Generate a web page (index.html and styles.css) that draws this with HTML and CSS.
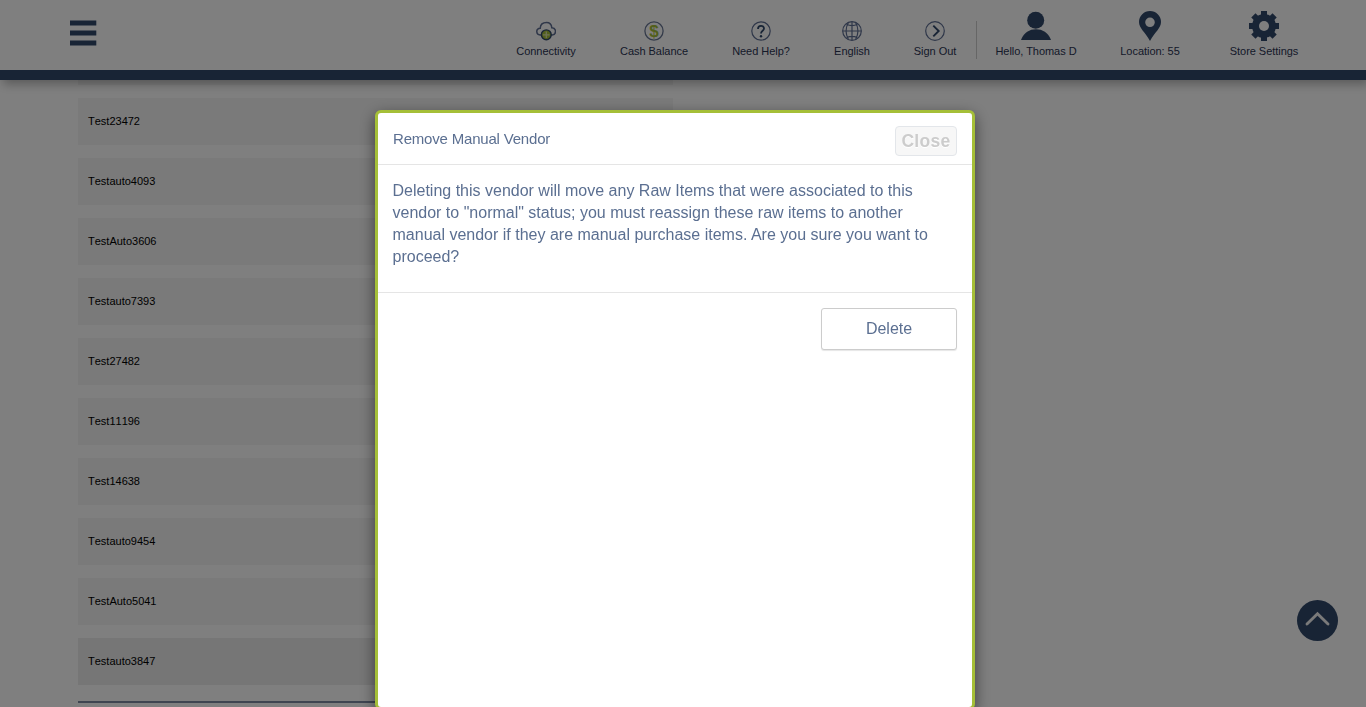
FILE: index.html
```html
<!DOCTYPE html>
<html lang="en">
<head>
<meta charset="utf-8">
<title>Manual Vendors</title>
<link rel="stylesheet" href="styles.css">
</head>
<body>
<header class="topbar">
  <button class="menu" aria-label="Menu"><svg width="27" height="26" viewBox="0 0 27 26" fill="#30486b"><path d="M0 .4h26.300v5.200H0zM0 10.400h26.300v5.200H0zM0 20.400h26.300v5.200H0z"/></svg></button>
  <nav class="tools">
    <a class="tool connectivity">
      <svg class="icon" width="20" height="20" viewBox="0 0 20 20"><path d="M6 14H4.200C-.3 13.500-.4 7.500 4.200 7.200C4.500 3 7.500 1.500 10.500 1.500C13.500 1.500 15.500 3.500 15.800 6.800C20.800 7.300 20.500 13.600 16.300 14H15" fill="none" stroke="#5e6e92" stroke-width="1.500"/><circle cx="10.300" cy="13.800" r="4.900" fill="#a5bf38" stroke="#30486b" stroke-width="1.400"/><path d="M10.300 10.500v6.600M7 13.800h6.600" stroke="#dbe5a8" stroke-width="1.300"/></svg>
      <span>Connectivity</span>
    </a>
    <a class="tool cash">
      <svg class="icon" width="20" height="20" viewBox="0 0 20 20"><circle cx="10" cy="10" r="9.100" fill="none" stroke="#6a7895" stroke-width="1.300"/><text x="10" y="15.800" text-anchor="middle" class="dollar">$</text></svg>
      <span>Cash Balance</span>
    </a>
    <a class="tool help">
      <svg class="icon" width="20" height="20" viewBox="0 0 20 20" fill="none"><circle cx="10" cy="10" r="9.200" stroke="#5e6e92" stroke-width="1.200"/><path d="M7 8c0-4 6-4 6-.5 0 2.200-3 2.300-3 5" stroke="#30486b" stroke-width="1.800"/><circle cx="10" cy="15.200" r="1.200" fill="#30486b"/></svg>
      <span>Need Help?</span>
    </a>
    <a class="tool language">
      <svg class="icon" width="20" height="20" viewBox="0 0 20 20" fill="none" stroke="#5e6e92" stroke-width="1.200"><circle cx="10" cy="10" r="9.300"/><path d="M6.500 1.300C3.300 7 3.300 13 6.500 18.700M13.500 1.300c3.200 5.700 3.200 11.700 0 17.400M.7 10h18.600M10 .7v18.600M4.500 3.200q5.500 2.700 11 0M4.500 16.800q5.500-2.700 11 0"/></svg>
      <span>English</span>
    </a>
    <a class="tool signout">
      <svg class="icon" width="20" height="20" viewBox="0 0 20 20" fill="none"><circle cx="10" cy="10" r="9.300" stroke="#5e6e92" stroke-width="1.200"/><path d="M8.300 4.600l5.400 5.400-5.400 5.400" stroke="#30486b" stroke-width="1.900"/></svg>
      <span>Sign Out</span>
    </a>
    <span class="divider"></span>
    <a class="tool user">
      <svg class="icon" width="30" height="30" viewBox="0 0 30 30" fill="#30486b"><circle cx="14.700" cy="9.300" r="8.500"/><path d="M0 29C3 21.500 8.500 18.300 15 18.300S27 21.500 30 29z"/></svg>
      <span>Hello, Thomas D</span>
    </a>
    <a class="tool location">
      <svg class="icon" width="30" height="30" viewBox="0 0 30 30" fill="#30486b"><path fill-rule="evenodd" d="M15 0a11 11 0 0 1 11 11c0 6-6 10-11 19C10 21 4 17 4 11A11 11 0 0 1 15 0zm0 6.500a4.800 4.800 0 1 0 0 9.600 4.800 4.800 0 0 0 0-9.600z"/></svg>
      <span>Location: 55</span>
    </a>
    <a class="tool settings">
      <svg class="icon" width="30" height="30" viewBox="0 0 30 30"><g fill="#30486b"><path id="tooth" d="M12 0h6v30h-6z"/><use href="#tooth" transform="rotate(45 15 15)"/><use href="#tooth" transform="rotate(90 15 15)"/><use href="#tooth" transform="rotate(135 15 15)"/><circle cx="15" cy="15" r="12"/></g><circle cx="15" cy="15" r="5" fill="#fff"/></svg>
      <span>Store Settings</span>
    </a>
  </nav>
</header>
<main class="vendors">
  <div class="vendor"></div>
  <div class="vendor">Test23472</div>
  <div class="vendor">Testauto4093</div>
  <div class="vendor">TestAuto3606</div>
  <div class="vendor">Testauto7393</div>
  <div class="vendor">Test27482</div>
  <div class="vendor">Test11196</div>
  <div class="vendor">Test14638</div>
  <div class="vendor">Testauto9454</div>
  <div class="vendor">TestAuto5041</div>
  <div class="vendor current">Testauto3847</div>
  <div class="rule"></div>
</main>
<button class="to-top" aria-label="Back to top"><svg width="41" height="41" viewBox="0 0 41 41"><circle cx="20.500" cy="20.500" r="20.500" fill="#30486b"/><path d="M10 24L20.500 13.800 31 24" fill="none" stroke="#f4f4f4" stroke-width="2.900" stroke-linecap="round"/></svg></button>
<div class="overlay"></div>
<section class="dialog" role="dialog">
  <div class="dialog-head"><h1 class="title">Remove Manual Vendor</h1><button class="close">Close</button></div>
  <p class="message">Deleting this vendor will move any Raw Items that were associated to this vendor to "normal" status; you must reassign these raw items to another manual vendor if they are manual purchase items. Are you sure you want to proceed?</p>
  <div class="actions"><button class="delete">Delete</button></div>
</section>
</body>
</html>
```
FILE: styles.css
```css
* { box-sizing: border-box; }
html, body { height: 100%; overflow: hidden; }
body { margin: 0; background: #fff; font-family: "Liberation Sans", Arial, sans-serif; }
button { font-family: inherit; margin: 0; padding: 0; border: 0; background: none; }

.topbar { position: relative; z-index: 1; display: flex; justify-content: space-between; height: 80px; padding-left: 70px; border-bottom: 10px solid #30486b; background: #fff; box-shadow: 3px 4px 10px rgba(0, 0, 0, .3); }
.menu { display: flex; align-items: flex-start; padding-top: 20px; }
.tools { display: flex; padding-right: 68px; color: #2b3453; font-size: 11px; line-height: 13px; letter-spacing: -.04px; white-space: nowrap; }
.tool { display: flex; flex-direction: column; justify-content: flex-end; align-items: center; gap: 4px; height: 58px; }
.connectivity { width: 60px; margin-right: 44px; }
.cash { width: 68px; margin-right: 44px; }
.help { width: 58px; margin-right: 44px; }
.language { width: 36px; margin-right: 44px; }
.signout { width: 42px; }
.divider { width: 1px; height: 38px; margin: 21px 18px 0 20px; background: #ccc; }
.user { width: 82px; margin-right: 43px; }
.location { width: 60px; margin-right: 50px; }
.settings { width: 68px; }
.dollar { fill: #a5bf38; font-size: 17px; font-weight: bold; }

.vendors { width: 595px; margin-left: 78px; margin-top: -42px; }
.vendor { height: 47px; margin-bottom: 13px; padding-left: 10px; background: #f4f4f4; color: #000; font-size: 11px; line-height: 46px; font-kerning: none; }
.vendor.current { background: #ececec; }
.rule { height: 2px; margin-top: 16px; background: #7e8ba3; }

.to-top { position: fixed; left: 1297px; top: 600px; width: 41px; height: 41px; }
.to-top svg { display: block; }
.overlay { position: fixed; inset: 0; z-index: 2; background: rgba(0, 0, 0, .5); }

.dialog { position: fixed; z-index: 3; left: 375px; top: 110px; width: 600px; height: 600px; border: 3px solid #a5bf38; border-radius: 6px; background: #fff; box-shadow: 0 5px 15px rgba(0, 0, 0, .5); color: #5b6f91; }
.dialog-head { display: flex; justify-content: space-between; height: 52px; padding: 13px 15px 0; border-bottom: 1px solid #e5e5e5; }
.title { margin: 4px 0 0; font-size: 15px; font-weight: normal; line-height: 18px; letter-spacing: -.19px; }
.close { width: 62px; height: 30px; border: 1px solid #e3e6ea; border-radius: 4px; background: #f7f7f7; color: #ccc; font-size: 17.500px; font-weight: bold; line-height: 28px; letter-spacing: .3px; text-shadow: 0 1px 0 #fff; }
.message { height: 128px; margin: 0; padding: 15px 30px 0 14.500px; border-bottom: 1px solid #e5e5e5; font-size: 16px; line-height: 22px; }
.actions { display: flex; justify-content: flex-end; padding: 15px; }
.delete { width: 136px; height: 42px; border: 1px solid #ccc; border-radius: 3px; background: #fff; box-shadow: 0 1px 1px rgba(0, 0, 0, .1); color: #5b6f91; font-size: 16px; line-height: 38px; }
```
